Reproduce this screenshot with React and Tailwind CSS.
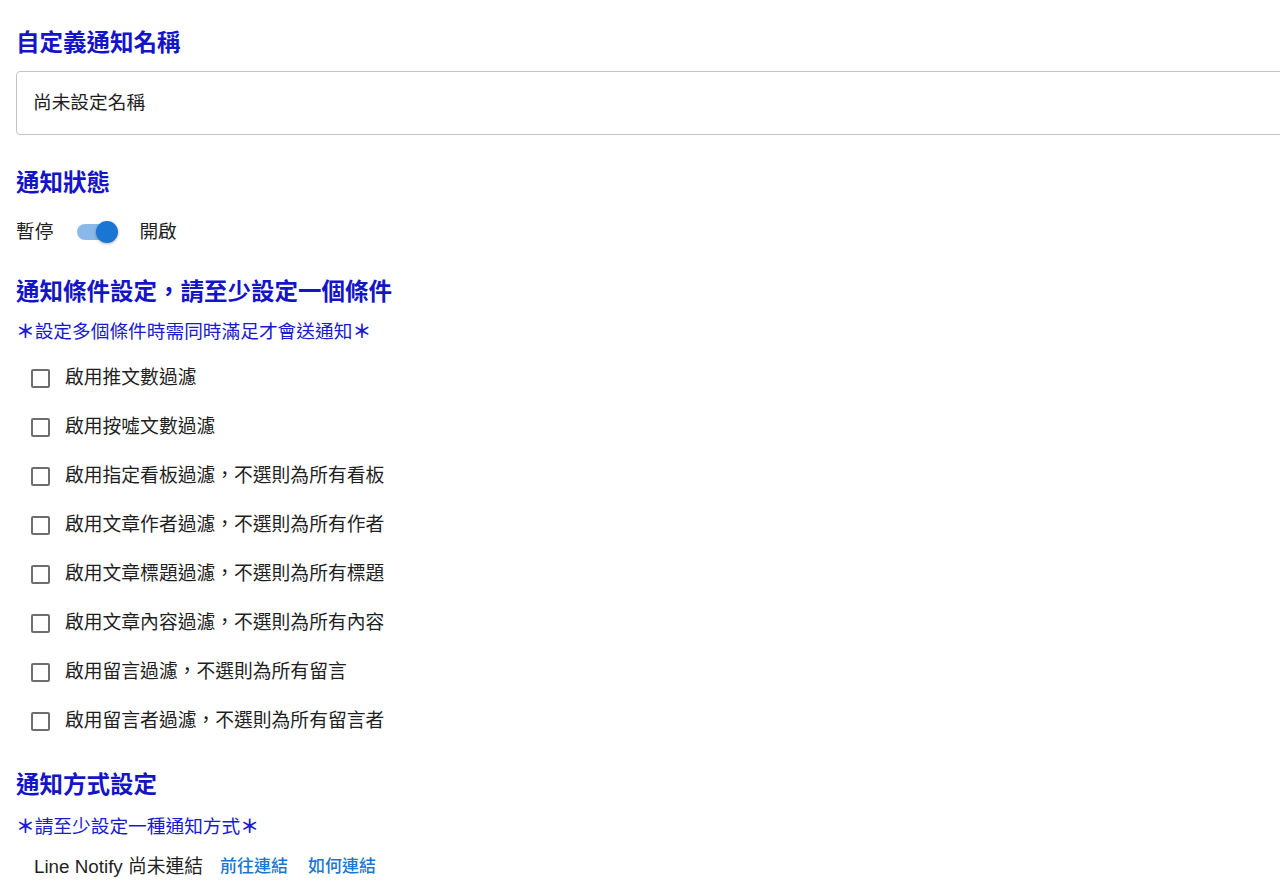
import React from 'react';

const conditions = [
  '啟用推文數過濾',
  '啟用按噓文數過濾',
  '啟用指定看板過濾，不選則為所有看板',
  '啟用文章作者過濾，不選則為所有作者',
  '啟用文章標題過濾，不選則為所有標題',
  '啟用文章內容過濾，不選則為所有內容',
  '啟用留言過濾，不選則為所有留言',
  '啟用留言者過濾，不選則為所有留言者',
];

const font = { fontFamily: '"Liberation Sans", "Noto Sans CJK TC", sans-serif' };

const Heading = ({ children, className = '' }) => (
  <h2 className={`text-[23.5px] leading-8 font-bold text-[#1515c8] ${className}`}>{children}</h2>
);

const Star = () => <span className="font-bold">＊</span>;

export default function App() {
  return (
    <div className="min-h-screen bg-white text-[#1f1f1f] pt-[27px] pl-4 overflow-hidden" style={font}>
      {/* 名稱 */}
      <Heading>自定義通知名稱</Heading>
      <div className="mt-3 h-16 w-[1300px] border border-[#c4c4c4] rounded-[4px] flex items-center pl-4 text-[18.7px]">
        尚未設定名稱
      </div>

      {/* 狀態 */}
      <Heading className="mt-8">通知狀態</Heading>
      <div className="mt-[17px] h-8 flex items-center text-[18.7px]">
        <span>暫停</span>
        <span className="relative ml-[24px] w-[42px] h-8 flex items-center">
          <span className="block w-[36px] h-4 rounded-full bg-[#8ab8e8]" />
          <span className="absolute left-[19px] top-[5px] w-[22px] h-[22px] rounded-full bg-[#1976d2] shadow-[0_1px_3px_rgba(0,0,0,0.3)]" />
        </span>
        <span className="ml-[20px]">開啟</span>
      </div>

      {/* 條件 */}
      <Heading className="mt-7">通知條件設定，請至少設定一個條件</Heading>
      <p className="mt-[10px] text-[18.7px] leading-7 text-[#1a1ad0]">
        <Star />設定多個條件時需同時滿足才會送通知<Star />
      </p>
      <ul className="mt-[8px]">
        {conditions.map((c) => (
          <li key={c} className="h-[49px] flex items-center text-[18.8px]">
            <span className="ml-[15px] w-[19px] h-[19px] border-2 border-[#6e6e6e] rounded-[2px]" />
            <span className="ml-[15px]">{c}</span>
          </li>
        ))}
      </ul>

      {/* 方式 */}
      <Heading className="mt-[23px]">通知方式設定</Heading>
      <p className="mt-3 text-[18.7px] leading-7 text-[#1a1ad0]">
        <Star />請至少設定一種通知方式<Star />
      </p>
      <div className="mt-3 h-7 flex items-center pl-[18px] text-[18.8px]">
        <span>Line Notify 尚未連結</span>
        <a href="#" className="ml-[17px] text-[17px] font-medium text-[#1976d2]">前往連結</a>
        <a href="#" className="ml-[20px] text-[17px] font-medium text-[#1976d2]">如何連結</a>
      </div>
    </div>
  );
}
